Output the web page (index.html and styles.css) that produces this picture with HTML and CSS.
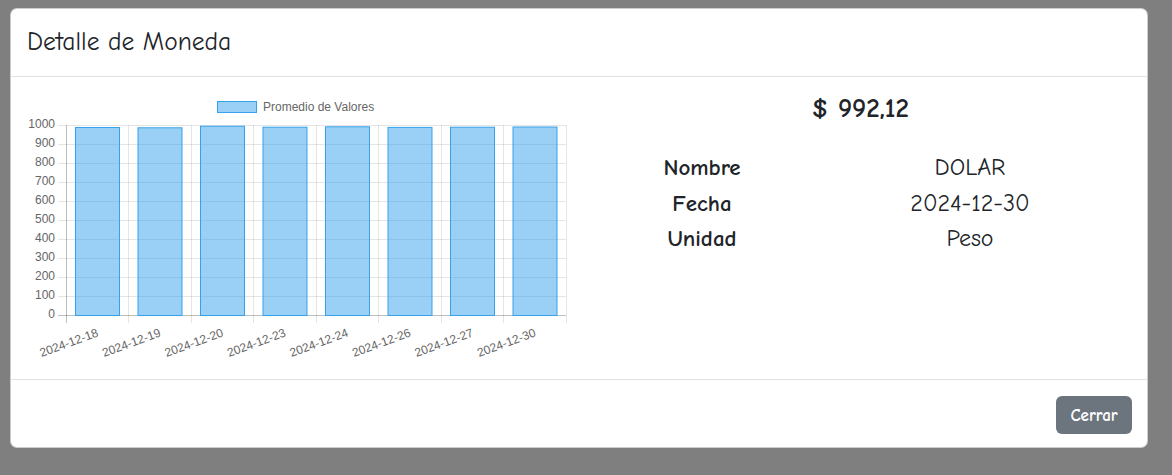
FILE: index.html
```html
<!DOCTYPE html>
<html lang="es">
<head>
<meta charset="utf-8">
<title>Detalle de Moneda</title>
<link rel="stylesheet" href="styles.css">
</head>
<body>
<div class="backdrop">
  <div class="modal">
    <div class="modal-header">
      <h5 class="modal-title">Detalle de Moneda</h5>
    </div>
    <div class="modal-body">
      <div class="chart-col">
        <svg class="chart" width="545" height="270" viewBox="0 0 545 270" xmlns="http://www.w3.org/2000/svg">
          <!-- legend -->
          <rect x="191.5" y="8.5" width="39" height="11" fill="rgba(54,162,235,0.5)" stroke="rgb(54,162,235)" stroke-width="1"/>
          <text class="lbl" x="237" y="18">Promedio de Valores</text>
          <!-- horizontal grid -->
          <g stroke="rgba(0,0,0,0.1)" stroke-width="1">
            <line x1="32" y1="32.5" x2="540" y2="32.5"/>
            <line x1="32" y1="51.5" x2="540" y2="51.5"/>
            <line x1="32" y1="70.5" x2="540" y2="70.5"/>
            <line x1="32" y1="89.5" x2="540" y2="89.5"/>
            <line x1="32" y1="108.5" x2="540" y2="108.5"/>
            <line x1="32" y1="127.5" x2="540" y2="127.5"/>
            <line x1="32" y1="146.5" x2="540" y2="146.5"/>
            <line x1="32" y1="165.5" x2="540" y2="165.5"/>
            <line x1="32" y1="184.5" x2="540" y2="184.5"/>
            <line x1="32" y1="203.5" x2="540" y2="203.5"/>
          </g>
          <!-- vertical grid -->
          <g stroke="rgba(0,0,0,0.1)" stroke-width="1">
            <line x1="102.5" y1="32" x2="102.5" y2="230"/>
            <line x1="165.5" y1="32" x2="165.5" y2="230"/>
            <line x1="227.5" y1="32" x2="227.5" y2="230"/>
            <line x1="290.5" y1="32" x2="290.5" y2="230"/>
            <line x1="352.5" y1="32" x2="352.5" y2="230"/>
            <line x1="415.5" y1="32" x2="415.5" y2="230"/>
            <line x1="477.5" y1="32" x2="477.5" y2="230"/>
            <line x1="540.5" y1="32" x2="540.5" y2="230"/>
          </g>
          <!-- axes -->
          <line x1="40.5" y1="32" x2="40.5" y2="230" stroke="rgba(0,0,0,0.25)"/>
          <line x1="32" y1="222.5" x2="540" y2="222.5" stroke="rgba(0,0,0,0.25)"/>
          <!-- bars -->
          <g fill="rgba(54,162,235,0.5)" stroke="rgb(54,162,235)" stroke-width="1">
            <rect x="49.5" y="34.5" width="44" height="188"/>
            <rect x="112" y="34.8" width="44" height="187.7"/>
            <rect x="174.5" y="33.2" width="44" height="189.3"/>
            <rect x="237" y="34.2" width="44" height="188.3"/>
            <rect x="299.5" y="33.8" width="44" height="188.7"/>
            <rect x="362" y="34.4" width="44" height="188.1"/>
            <rect x="424.5" y="34.2" width="44" height="188.3"/>
            <rect x="487" y="34" width="44" height="188.5"/>
          </g>
          <!-- y labels -->
          <g class="lbl ylbl">
            <text x="29" y="32">1000</text>
            <text x="29" y="51">900</text>
            <text x="29" y="70">800</text>
            <text x="29" y="89">700</text>
            <text x="29" y="108">600</text>
            <text x="29" y="127">500</text>
            <text x="29" y="146">400</text>
            <text x="29" y="165">300</text>
            <text x="29" y="184">200</text>
            <text x="29" y="203">100</text>
            <text x="29" y="222">0</text>
          </g>
          <!-- x labels -->
          <g class="lbl xlbl">
            <text transform="translate(72 240) rotate(-20)">2024-12-18</text>
            <text transform="translate(134.5 240) rotate(-20)">2024-12-19</text>
            <text transform="translate(197 240) rotate(-20)">2024-12-20</text>
            <text transform="translate(259.5 240) rotate(-20)">2024-12-23</text>
            <text transform="translate(322 240) rotate(-20)">2024-12-24</text>
            <text transform="translate(384.5 240) rotate(-20)">2024-12-26</text>
            <text transform="translate(447 240) rotate(-20)">2024-12-27</text>
            <text transform="translate(509.5 240) rotate(-20)">2024-12-30</text>
          </g>
        </svg>
      </div>
      <div class="info-col">
        <h4 class="price">$ 992,12</h4>
        <div class="info-grid">
          <div class="info-label">Nombre</div>
          <div class="info-value">DOLAR</div>
          <div class="info-label">Fecha</div>
          <div class="info-value">2024-12-30</div>
          <div class="info-label">Unidad</div>
          <div class="info-value">Peso</div>
        </div>
      </div>
    </div>
    <div class="modal-footer">
      <button class="btn-close" type="button">Cerrar</button>
    </div>
  </div>
</div>
</body>
</html>
```

FILE: styles.css
```css
* { box-sizing: border-box; }
html, body {
  margin: 0;
  padding: 0;
  height: 100%;
}
body {
  background: #7f7f7f;
  font-family: "Comic Sans MS", "Comic Neue", cursive;
  color: #212529;
}
.backdrop {
  padding: 8px 24px 0 10px;
}
.modal {
  width: 1138px;
  background: #fff;
  border-radius: 7px;
  border: 1px solid rgba(0,0,0,0.2);
}
.modal-header {
  height: 68px;
  padding: 0 16px;
  display: flex;
  align-items: center;
  border-bottom: 1px solid #dee2e6;
}
.modal-title {
  margin: 0;
  font-size: 25.5px;
  font-weight: normal;
  line-height: 1.5;
  padding-top: 0;
}
.modal-body {
  display: flex;
  padding: 16px 16px 16px 15px;
}
.chart-col {
  width: 545px;
  flex: none;
}
.chart {
  display: block;
}
.lbl {
  font-family: "Liberation Sans", Arial, sans-serif;
  font-size: 12px;
  fill: #666;
}
.ylbl text {
  text-anchor: end;
  dominant-baseline: middle;
}
.xlbl text {
  text-anchor: end;
  dominant-baseline: middle;
}
.info-col {
  flex: 1;
}
.price {
  margin: 0;
  padding: 0 0 0 19px;
  text-align: center;
  font-size: 27px;
  font-weight: bold;
  line-height: 1.2;
}
.info-grid {
  display: grid;
  grid-template-columns: 268px 268px;
  margin: 25px 0 0 -3px;
  font-size: 22px;
  line-height: 35.5px;
  text-align: center;
}
.info-label {
  font-weight: bold;
  font-size: 23px;
}
.info-value {
  font-size: 24px;
}
.modal-footer {
  display: flex;
  justify-content: flex-end;
  padding: 16px 15px 13px;
  border-top: 1px solid #dee2e6;
}
.btn-close {
  width: 76px;
  height: 38px;
  border: none;
  border-radius: 6px;
  background: #6c757d;
  color: #fff;
  font-family: inherit;
  font-size: 17px;
  font-weight: bold;
  cursor: pointer;
}
```
